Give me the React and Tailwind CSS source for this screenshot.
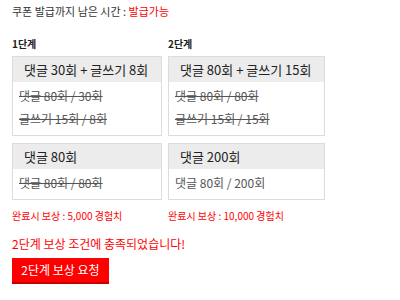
const FONT = { fontFamily: '"Noto Sans CJK KR", "Noto Sans", sans-serif' };

const STAGES = [
  {
    label: '1단계',
    width: 'w-[150px]',
    top: { title: '댓글 30회 + 글쓰기 8회', rows: [{ text: '댓글 80회 / 30회', done: true }, { text: '글쓰기 15회 / 8회', done: true }] },
    bottom: { title: '댓글 80회', rows: [{ text: '댓글 80회 / 80회', done: true }] },
    reward: '완료시 보상 : 5,000 경험치',
  },
  {
    label: '2단계',
    width: 'w-[157px]',
    top: { title: '댓글 80회 + 글쓰기 15회', rows: [{ text: '댓글 80회 / 80회', done: true }, { text: '글쓰기 15회 / 15회', done: true }] },
    bottom: { title: '댓글 200회', rows: [{ text: '댓글 80회 / 200회', done: false }] },
    reward: '완료시 보상 : 10,000 경험치',
  },
];

function MissionBox({ box }) {
  return (
    <div className="border border-[#dcdcdc] bg-white">
      <div className="h-[25px] bg-[#ececec] pl-[11px] flex items-center text-[13px] text-[#222] whitespace-nowrap">{box.title}</div>
      <div className="px-[6px] pt-[2px] pb-[5px]">
        {box.rows.map((r, i) => (
          <div key={i} className={`h-[23px] flex items-center text-[12px] text-[#555] whitespace-nowrap ${r.done ? 'line-through' : ''}`}>
            {r.text}
          </div>
        ))}
      </div>
    </div>
  );
}

export default function App() {
  return (
    <div className="w-[400px] h-[300px] bg-white overflow-hidden pl-[12px]" style={FONT}>
      <div className="pt-[3px] h-[16px] text-[11px] text-[#333] leading-[16px]">
        쿠폰 발급까지 남은 시간 : <span className="text-[#ff0000]">발급가능</span>
      </div>

      <div className="flex gap-[6px] mt-[19px]">
        {STAGES.map(s => (
          <div key={s.label} className={s.width}>
            <div className="h-[18px] text-[10px] font-bold text-[#222] leading-[18px]">{s.label}</div>
            <div className="mt-[3px]">
              <MissionBox box={s.top} />
            </div>
            <div className="mt-[7px]">
              <MissionBox box={s.bottom} />
            </div>
            <div className="mt-[8px] text-[10px] text-[#ff0000] leading-[16px] whitespace-nowrap">{s.reward}</div>
          </div>
        ))}
      </div>

      <div className="mt-[12px] text-[12px] text-[#ff0000] leading-[16px]">2단계 보상 조건에 충족되었습니다!</div>

      <button className="mt-[6px] w-[97px] h-[26px] bg-[#ff0000] border-b-2 border-[#c80000] text-white text-[12px] flex items-center justify-center">
        2단계 보상 요청
      </button>
    </div>
  );
}
